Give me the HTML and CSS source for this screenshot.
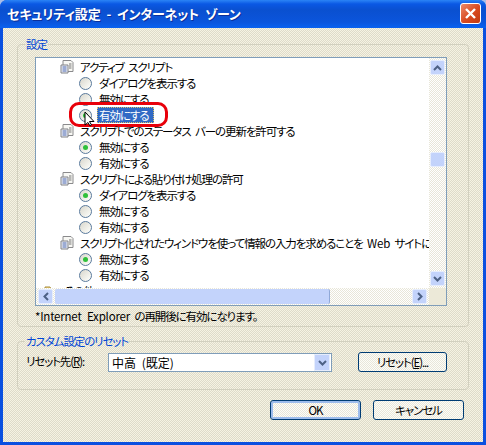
FILE: index.html
```html
<!DOCTYPE html>
<html lang="ja">
<head>
  <meta charset="UTF-8">
  <title>セキュリティ設定 - インターネット ゾーン</title>
  <link rel="stylesheet" href="styles.css">
</head>
<body>
  <div class="window">
    <!-- タイトルバー -->
    <header class="titlebar">
      <span class="title">セキュリティ設定 - インターネット ゾーン</span>
      <span class="close">
        <svg width="13" height="13" viewBox="0 0 13 13"><path d="M2 2l9 9M11 2l-9 9" stroke="#fff" stroke-width="2.4" fill="none"/></svg>
      </span>
    </header>

    <main class="content">
      <!-- 設定 -->
      <fieldset class="group settings">
        <legend>設定</legend>
        <div class="listbox">
          <div class="list">
            <div class="row head"><svg class="doc" viewBox="0 0 14 14"><use href="#doc-icon"/></svg>アクティブ スクリプト</div>
            <div class="row opt"><i class="radio"></i>ダイアログを表示する</div>
            <div class="row opt"><i class="radio"></i>無効にする</div>
            <div class="row opt">
              <i class="radio on"></i><span class="selected">有効にする</span>
              <span class="ring"></span>
              <svg class="cursor" width="13" height="16" viewBox="0 0 13 16"><path d="M1 1v13l3-2.500 2 3.500 1.500-1-2-3.500h4.500z" fill="#fff" stroke="#000"/></svg>
            </div>
            <div class="row head"><svg class="doc" viewBox="0 0 14 14"><use href="#doc-icon"/></svg>スクリプトでのステータス バーの更新を許可する</div>
            <div class="row opt"><i class="radio on"></i>無効にする</div>
            <div class="row opt"><i class="radio"></i>有効にする</div>
            <div class="row head"><svg class="doc" viewBox="0 0 14 14"><use href="#doc-icon"/></svg>スクリプトによる貼り付け処理の許可</div>
            <div class="row opt"><i class="radio on"></i>ダイアログを表示する</div>
            <div class="row opt"><i class="radio"></i>無効にする</div>
            <div class="row opt"><i class="radio"></i>有効にする</div>
            <div class="row head"><svg class="doc" viewBox="0 0 14 14"><use href="#doc-icon"/></svg>スクリプト化されたウィンドウを使って情報の入力を求めることを&nbsp;<span class="latin">Web</span>&nbsp;サイトに許可する</div>
            <div class="row opt"><i class="radio on"></i>無効にする</div>
            <div class="row opt"><i class="radio"></i>有効にする</div>
            <div class="row folder">
              <svg class="folder-icon" width="14" height="12" viewBox="0 0 14 12"><path d="M1 2h5l1 2h6v7H1z" fill="#f5d77a" stroke="#a58a3c"/></svg>その他
            </div>
          </div>

          <!-- 縦スクロールバー -->
          <div class="vscroll">
            <span class="sbtn"><svg width="9" height="6" viewBox="0 0 9 6"><path d="M1 5l3.500-3.500L8 5" class="chev"/></svg></span>
            <span class="vthumb"></span>
            <span class="sbtn"><svg width="9" height="6" viewBox="0 0 9 6"><path d="M1 1l3.500 3.500L8 1" class="chev"/></svg></span>
          </div>
          <!-- 横スクロールバー -->
          <div class="hscroll">
            <span class="sbtn"><svg width="6" height="9" viewBox="0 0 6 9"><path d="M5 1L1.500 4.500 5 8" class="chev"/></svg></span>
            <span class="hthumb"></span>
            <span class="sbtn"><svg width="6" height="9" viewBox="0 0 6 9"><path d="M1 1l3.500 3.500L1 8" class="chev"/></svg></span>
          </div>
          <div class="corner"></div>
        </div>
        <p class="note"><span class="latin">*Internet Explorer</span> の再開後に有効になります。</p>
      </fieldset>

      <!-- カスタム設定のリセット -->
      <fieldset class="group reset">
        <legend>カスタム設定のリセット</legend>
        <div class="reset-row">
          <label class="reset-label">リセット先(<u>R</u>):</label>
          <div class="select">
            <span class="select-text">中高 (既定)</span>
            <span class="sbtn select-btn"><svg width="9" height="6" viewBox="0 0 9 6"><path d="M1 1l3.500 3.500L8 1" class="chev"/></svg></span>
          </div>
          <button class="btn reset-btn">リセット(<u>E</u>)...</button>
        </div>
      </fieldset>

      <div class="actions">
        <button class="btn default">OK</button>
        <button class="btn">キャンセル</button>
      </div>
    </main>
  </div>

  <!-- 項目アイコン -->
  <svg width="0" height="0" class="defs">
    <symbol id="doc-icon" viewBox="0 0 14 14">
      <path d="M3 .5h8l2 2v9H3z" fill="#f8f8f4" stroke="#8a8a8c"/>
      <path d="M1 5h7v8H1z" fill="#eeeff4" stroke="#808288"/>
      <path d="M2.500 7h4M2.500 9h4M2.500 11h4" stroke="#4a68b4"/>
      <path d="M9 4h2.500M9 6h2.500M9 8h2.500" stroke="#777"/>
    </symbol>
  </svg>
</body>
</html>
```

FILE: styles.css
```css
:root {
  --frame: #0a50e0;
  --face: #ece9d8;
  --line: #d2d0bf;
  --list-border: #7f9db9;
  --scroll: #c3d3fb;
  --chev: #4d6185;
}

* {
  box-sizing: border-box;
}

html, body {
  margin: 0;
  height: 100%;
}

body {
  background: #a9bde8;
  font-family: "Noto Sans CJK JP", "Noto Sans", sans-serif;
  font-size: 11.5px;
  font-feature-settings: "palt";
  letter-spacing: -1.1px;
  word-spacing: 3px;
  color: #000;
  overflow: hidden;
}

.latin {
  letter-spacing: -0.2px;
}

.window {
  display: flex;
  flex-direction: column;
  width: 486px;
  height: 445px;
  border-radius: 7px 7px 0 0;
  background: var(--frame);
  padding: 0 3px 3px;
  overflow: hidden;
}

.defs {
  position: absolute;
}

/* タイトルバー */
.titlebar {
  display: flex;
  flex: none;
  align-items: center;
  justify-content: space-between;
  height: 28px;
  margin: 0 -3px;
  padding: 0 5px 1px 7px;
  background: linear-gradient(#2b84f6 0, #0a58e4 4px, #0a50d0 10px, #0b55dc 22px, #0a62f0 28px);
}

.title {
  color: #fff;
  font-size: 13px;
  font-weight: 700;
  letter-spacing: -0.1px;
  word-spacing: 3px;
  text-shadow: 1px 1px 0 #0a2f9a;
}

.close {
  display: flex;
  align-items: center;
  justify-content: center;
  width: 21px;
  height: 21px;
  border: 1px solid #fff;
  border-radius: 3px;
  background: linear-gradient(135deg, #ec8a6a, #d8491f 55%, #c03a12);
}

/* ダイアログ本体 */
.content {
  flex: 1;
  display: flex;
  flex-direction: column;
  padding: 9px 14px 0;
  background: repeating-conic-gradient(#f6f3e3 0 25%, #dedbca 0 50%) 0 0 / 2px 2px;
}

.group {
  margin: 0;
  min-width: 0;
  border: 1px solid var(--line);
  border-radius: 4px;
}

.group legend {
  padding: 0 1px;
  color: #0046d5;
  line-height: 14px;
}

.settings {
  height: 290px;
  padding: 6px 21px 0 17px;
}

.settings legend {
  margin-left: -10px;
}

.reset {
  height: 56px;
  margin-top: 7px;
  padding: 4px 21px 0 8px;
}

.reset legend {
  margin-left: -1px;
}

/* リスト */
.listbox {
  display: grid;
  grid-template-columns: 1fr 17px;
  grid-template-rows: 230px 17px;
  height: 249px;
  border: 1px solid var(--list-border);
  background: #fff;
}

.list {
  overflow: hidden;
  padding-top: 1px;
  white-space: nowrap;
}

.row {
  position: relative;
  display: flex;
  align-items: center;
  height: 16px;
  line-height: 16px;
}

.head {
  padding-left: 24px;
}

.doc {
  width: 14px;
  height: 14px;
  margin-right: 6px;
  flex: none;
}

.opt {
  padding-left: 43px;
}

.folder {
  padding-left: 8px;
}

.folder-icon {
  margin-right: 6px;
  flex: none;
}

.radio {
  flex: none;
  position: relative;
  width: 13px;
  height: 13px;
  margin-right: 7px;
  border: 1px solid #5a7a9c;
  border-radius: 50%;
  background: linear-gradient(135deg, #d8d6cc, #f4f4ee 70%, #fff);
}

.radio.on::after {
  content: "";
  position: absolute;
  top: 3px;
  left: 3px;
  width: 5px;
  height: 5px;
  border-radius: 50%;
  background: #2fc03a;
}

.selected {
  margin-left: -2px;
  padding: 0 6px 0 2px;
  height: 16px;
  background: #316ac5;
  color: #fff;
  outline: 1px dotted #d8c070;
  outline-offset: -1px;
}

/* 操作説明の赤丸とカーソル */
.ring {
  position: absolute;
  left: 33px;
  top: -5px;
  width: 99px;
  height: 25px;
  border: 3px solid #e8000a;
  border-radius: 10px;
}

.cursor {
  position: absolute;
  left: 48px;
  top: 4px;
}

/* スクロールバー */
.vscroll,
.hscroll {
  display: flex;
  justify-content: space-between;
  background: repeating-conic-gradient(#fff 0 25%, #e8e6d8 0 50%) 0 0 / 2px 2px;
}

.vscroll {
  flex-direction: column;
  position: relative;
  padding: 2px 1px;
}

.hscroll {
  padding: 1px 2px;
}

.corner {
  background: var(--face);
}

.sbtn {
  display: flex;
  flex: none;
  align-items: center;
  justify-content: center;
  width: 15px;
  height: 15px;
  border: 1px solid #e6edfd;
  border-radius: 2px;
  background: var(--scroll);
}

.chev {
  fill: none;
  stroke: var(--chev);
  stroke-width: 2;
}

.vthumb {
  position: absolute;
  top: 94px;
  left: 1px;
  width: 15px;
  height: 15px;
  border: 1px solid #e6edfd;
  border-radius: 2px;
  background: var(--scroll);
}

.hthumb {
  flex: none;
  width: 275px;
  margin: 0 auto 0 2px;
  border-right: 1px solid #8fa8d8;
  border-radius: 2px;
  background: var(--scroll);
}

.note {
  margin: 2px 0 0;
  line-height: 16px;
  white-space: nowrap;
}

/* リセット行 */
.reset-row {
  display: flex;
  align-items: flex-start;
}

.reset-label {
  width: 82px;
  flex: none;
  line-height: 16px;
  margin-top: 1px;
}

.select {
  display: flex;
  align-items: center;
  justify-content: space-between;
  width: 224px;
  height: 19px;
  padding: 0 1px 0 3px;
  border: 1px solid var(--list-border);
  background: #fff;
  margin-top: 1px;
}

.select-text {
  font-size: 12px;
  letter-spacing: 0;
}

.select-btn {
  width: 16px;
  height: 17px;
  border-radius: 0;
}

.btn {
  width: 91px;
  height: 20px;
  padding: 0;
  border: 1px solid #003c74;
  border-radius: 3px;
  background: repeating-conic-gradient(#fdfdf8 0 25%, #e8e6da 0 50%) 0 0 / 2px 2px;
  font: inherit;
  font-feature-settings: inherit;
  letter-spacing: inherit;
  word-spacing: inherit;
  color: #000;
}

.reset-btn {
  width: 89px;
  margin-left: 26px;
}

.default {
  box-shadow: inset 0 0 0 2px #9dbcec;
}

.actions {
  display: flex;
  justify-content: flex-end;
  gap: 12px;
  margin-top: 10px;
  padding-right: 5px;
}
```
